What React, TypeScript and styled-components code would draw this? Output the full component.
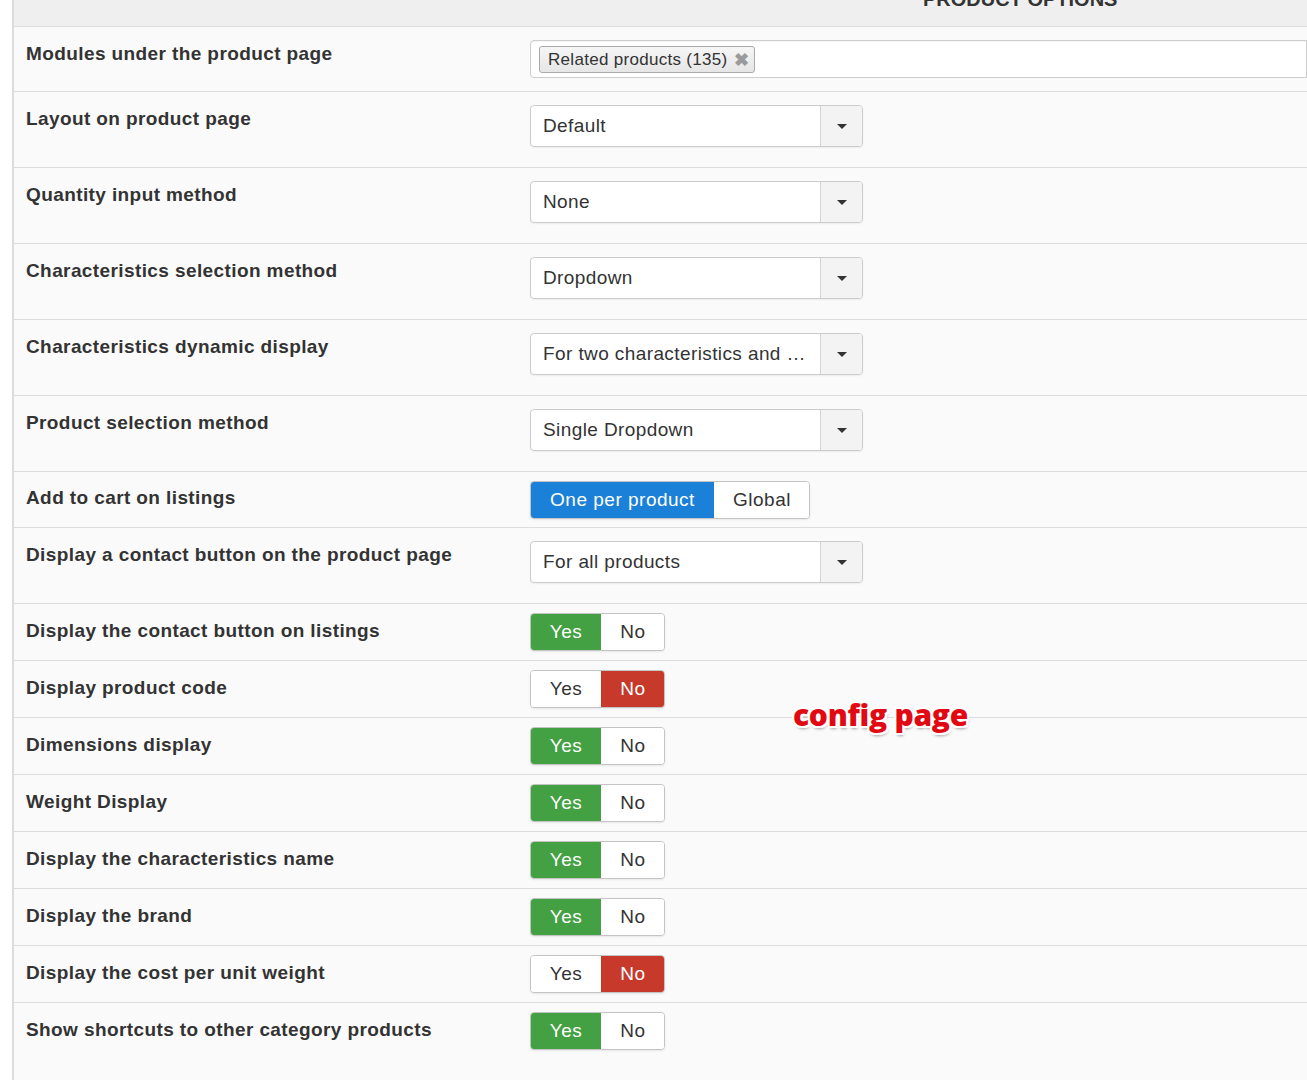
import React from "react";
import styled, { createGlobalStyle } from "styled-components";

const GlobalStyle = createGlobalStyle`
  html, body {
    margin: 0;
    padding: 0;
    background: #ffffff;
    font-family: "Liberation Sans", Arial, Helvetica, sans-serif;
    color: #333;
  }
  * { box-sizing: border-box; }
`;

const Page = styled.div`
  width: 1307px;
  min-height: 1080px;
  padding-left: 12px;
  overflow: hidden;
  position: relative;
`;

const Panel = styled.section`
  min-height: 1080px;
  background: #fafafa;
  border-left: 2px solid #dcdcdc;
  overflow: hidden;
`;

const Header = styled.header`
  height: 27px;
  background: #efefef;
  border-bottom: 1px solid #dddddd;
  padding-left: 909px;
  overflow: hidden;
`;

const HeaderTitle = styled.h2`
  margin: -11px 0 0;
  font-size: 20px;
  line-height: 20px;
  font-weight: bold;
  text-transform: uppercase;
  color: #333;
  white-space: nowrap;
`;

const Row = styled.div<{ $top: number; $bottom: number }>`
  display: grid;
  grid-template-columns: 516px 1fr;
  border-bottom: 1px solid #dddddd;
  padding-top: ${(p) => p.$top}px;
  padding-bottom: ${(p) => p.$bottom}px;
  &:last-child {
    border-bottom: none;
  }
`;

const Label = styled.div<{ $offset: number }>`
  padding-left: 12px;
  margin-top: ${(p) => p.$offset}px;
  font-size: 19px;
  line-height: 22px;
  font-weight: bold;
  letter-spacing: 0.4px;
  color: #333;
  white-space: nowrap;
`;

const Control = styled.div`
  display: flex;
  align-items: flex-start;
  min-width: 0;
`;

/* Multi-select field holding chosen tags */
const TagField = styled.div`
  width: 790px;
  height: 38px;
  background: #fff;
  border: 1px solid #cccccc;
  border-radius: 4px 0 0 4px;
  box-shadow: inset 0 1px 1px rgba(0, 0, 0, 0.04);
  padding: 5px 0 0 8px;
  display: flex;
`;

const Tag = styled.span`
  display: inline-flex;
  align-items: center;
  gap: 6px;
  height: 27px;
  padding: 0 5px 0 8px;
  background: linear-gradient(#f6f6f6, #e6e6e6);
  border: 1px solid #aaaaaa;
  border-radius: 3px;
  font-size: 17px;
  color: #333;
  letter-spacing: 0.3px;
`;

const TagClose = styled.span`
  color: #9a9a9a;
  font-size: 18px;
  font-weight: bold;
  line-height: 1;
`;

/* Single select with caret box */
const Select = styled.div`
  width: 333px;
  height: 42px;
  display: flex;
  background: #fff;
  border: 1px solid #cccccc;
  border-radius: 4px;
  box-shadow: 0 1px 2px rgba(0, 0, 0, 0.06);
  overflow: hidden;
`;

const SelectValue = styled.span`
  flex: 1;
  min-width: 0;
  padding: 0 10px 0 12px;
  font-size: 19px;
  line-height: 40px;
  letter-spacing: 0.4px;
  color: #333;
  white-space: nowrap;
  overflow: hidden;
  text-overflow: ellipsis;
`;

const Caret = styled.span`
  width: 42px;
  flex: none;
  display: flex;
  align-items: center;
  justify-content: center;
  background: #f3f3f3;
  border-left: 1px solid #d6d6d6;
  &::after {
    content: "";
    border-left: 5px solid transparent;
    border-right: 5px solid transparent;
    border-top: 5px solid #333;
  }
`;

/* Segmented radio buttons */
const Group = styled.div<{ $height: number }>`
  display: inline-flex;
  height: ${(p) => p.$height}px;
  border: 1px solid #c4c4c4;
  border-radius: 4px;
  overflow: hidden;
  background: #fff;
  box-shadow: 0 1px 2px rgba(0, 0, 0, 0.08);
`;

type Tone = "green" | "red" | "blue" | "off";

const toneBg: Record<Tone, string> = {
  green: "#43a143",
  red: "#c6392b",
  blue: "#1b80d8",
  off: "#ffffff",
};

const Segment = styled.span<{ $tone: Tone; $width: number }>`
  width: ${(p) => p.$width}px;
  display: flex;
  align-items: center;
  justify-content: center;
  font-size: 19px;
  letter-spacing: 0.5px;
  color: ${(p) => (p.$tone === "off" ? "#333" : "#fff")};
  background: ${(p) => toneBg[p.$tone]};
  & + & {
    border-left: 1px solid ${(p) => (p.$tone === "off" ? "#d0d0d0" : "transparent")};
  }
`;

const Stamp = styled.div`
  position: absolute;
  left: 793px;
  top: 700px;
  font-family: "Open Sans", "Noto Sans", sans-serif;
  font-weight: 800;
  font-size: 30px;
  line-height: 30px;
  color: #e20a12;
  letter-spacing: -0.3px;
  text-shadow: -2px -2px 0 #fff, 2px -2px 0 #fff, -2px 2px 0 #fff, 2px 2px 0 #fff,
    0 -2px 0 #fff, 0 2px 0 #fff, -2px 0 0 #fff, 2px 0 0 #fff,
    1px 3px 3px rgba(0, 0, 0, 0.35);
`;

type Setting =
  | { kind: "tags"; label: string; tags: string[] }
  | { kind: "select"; label: string; value: string }
  | { kind: "choice"; label: string; options: [string, number][]; active: number }
  | { kind: "yesno"; label: string; yes: boolean };

const settings: Setting[] = [
  { kind: "tags", label: "Modules under the product page", tags: ["Related products (135)"] },
  { kind: "select", label: "Layout on product page", value: "Default" },
  { kind: "select", label: "Quantity input method", value: "None" },
  { kind: "select", label: "Characteristics selection method", value: "Dropdown" },
  { kind: "select", label: "Characteristics dynamic display", value: "For two characteristics and …" },
  { kind: "select", label: "Product selection method", value: "Single Dropdown" },
  {
    kind: "choice",
    label: "Add to cart on listings",
    options: [
      ["One per product", 183],
      ["Global", 95],
    ],
    active: 0,
  },
  { kind: "select", label: "Display a contact button on the product page", value: "For all products" },
  { kind: "yesno", label: "Display the contact button on listings", yes: true },
  { kind: "yesno", label: "Display product code", yes: false },
  { kind: "yesno", label: "Dimensions display", yes: true },
  { kind: "yesno", label: "Weight Display", yes: true },
  { kind: "yesno", label: "Display the characteristics name", yes: true },
  { kind: "yesno", label: "Display the brand", yes: true },
  { kind: "yesno", label: "Display the cost per unit weight", yes: false },
  { kind: "yesno", label: "Show shortcuts to other category products", yes: true },
];

function renderControl(s: Setting) {
  switch (s.kind) {
    case "tags":
      return (
        <TagField>
          {s.tags.map((t) => (
            <Tag key={t}>
              {t}
              <TagClose>✖</TagClose>
            </Tag>
          ))}
        </TagField>
      );
    case "select":
      return (
        <Select>
          <SelectValue>{s.value}</SelectValue>
          <Caret />
        </Select>
      );
    case "choice":
      return (
        <Group $height={38}>
          {s.options.map(([text, w], i) => (
            <Segment key={text} $width={w} $tone={i === s.active ? "blue" : "off"}>
              {text}
            </Segment>
          ))}
        </Group>
      );
    case "yesno":
      return (
        <Group $height={38}>
          <Segment $width={70} $tone={s.yes ? "green" : "off"}>
            Yes
          </Segment>
          <Segment $width={63} $tone={s.yes ? "off" : "red"}>
            No
          </Segment>
        </Group>
      );
  }
}

function spacing(s: Setting, last: boolean) {
  if (s.kind === "select") return { top: 13, bottom: 20, offset: 3 };
  if (s.kind === "tags") return { top: 13, bottom: 13, offset: 3 };
  if (s.kind === "choice") return { top: 9, bottom: 8, offset: 6 };
  return { top: 9, bottom: last ? 40 : 9, offset: 7 };
}

export default function App() {
  return (
    <>
      <GlobalStyle />
      <Page>
        <Panel>
          <Header>
            <HeaderTitle>Product Options</HeaderTitle>
          </Header>
          {settings.map((s, i) => {
            const sp = spacing(s, i === settings.length - 1);
            return (
              <Row key={s.label} $top={sp.top} $bottom={sp.bottom}>
                <Label $offset={sp.offset}>{s.label}</Label>
                <Control>{renderControl(s)}</Control>
              </Row>
            );
          })}
        </Panel>
        <Stamp>config page</Stamp>
      </Page>
    </>
  );
}
